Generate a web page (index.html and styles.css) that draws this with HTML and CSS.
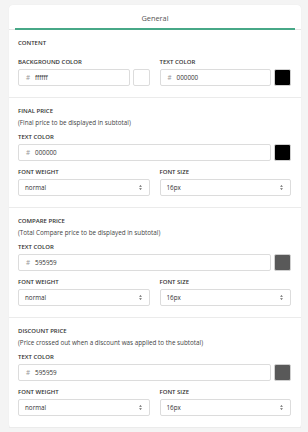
FILE: index.html
```html
<!DOCTYPE html>
<html lang="en">
<head>
    <meta charset="UTF-8">
    <meta name="viewport" content="width=device-width, initial-scale=1.0">
    <title>Subtotal Settings</title>
    <link rel="stylesheet" href="styles.css">
</head>
<body>
    <div class="card">
        <div class="tabs">
            <div class="tab active">General</div>
        </div>

        <!-- Content -->
        <div class="section">
            <div class="section-title">CONTENT</div>
            <div class="row first">
                <div class="field">
                    <label>BACKGROUND COLOR</label>
                    <div class="color-input">
                        <div class="input"><span class="hash">#</span>ffffff</div>
                        <div class="swatch" style="background: #ffffff;"></div>
                    </div>
                </div>
                <div class="field">
                    <label>TEXT COLOR</label>
                    <div class="color-input">
                        <div class="input"><span class="hash">#</span>000000</div>
                        <div class="swatch dark" style="background: #000000;"></div>
                    </div>
                </div>
            </div>
        </div>

        <!-- Final price -->
        <div class="section">
            <div class="section-title">FINAL PRICE</div>
            <div class="section-note">(Final price to be displayed in subtotal)</div>
            <div class="row">
                <div class="field wide">
                    <label>TEXT COLOR</label>
                    <div class="color-input">
                        <div class="input"><span class="hash">#</span>000000</div>
                        <div class="swatch dark" style="background: #000000;"></div>
                    </div>
                </div>
            </div>
            <div class="row">
                <div class="field">
                    <label>FONT WEIGHT</label>
                    <div class="select">normal <svg class="arrows" viewBox="0 0 4 7"><path d="M2 0 L4 2.5 H0 Z M2 7 L4 4.5 H0 Z"/></svg></div>
                </div>
                <div class="field">
                    <label>FONT SIZE</label>
                    <div class="select">16px <svg class="arrows" viewBox="0 0 4 7"><path d="M2 0 L4 2.5 H0 Z M2 7 L4 4.5 H0 Z"/></svg></div>
                </div>
            </div>
        </div>

        <!-- Compare price -->
        <div class="section">
            <div class="section-title">COMPARE PRICE</div>
            <div class="section-note">(Total Compare price to be displayed in subtotal)</div>
            <div class="row">
                <div class="field wide">
                    <label>TEXT COLOR</label>
                    <div class="color-input">
                        <div class="input"><span class="hash">#</span>595959</div>
                        <div class="swatch dark" style="background: #595959;"></div>
                    </div>
                </div>
            </div>
            <div class="row">
                <div class="field">
                    <label>FONT WEIGHT</label>
                    <div class="select">normal <svg class="arrows" viewBox="0 0 4 7"><path d="M2 0 L4 2.5 H0 Z M2 7 L4 4.5 H0 Z"/></svg></div>
                </div>
                <div class="field">
                    <label>FONT SIZE</label>
                    <div class="select">16px <svg class="arrows" viewBox="0 0 4 7"><path d="M2 0 L4 2.5 H0 Z M2 7 L4 4.5 H0 Z"/></svg></div>
                </div>
            </div>
        </div>

        <!-- Discount price -->
        <div class="section">
            <div class="section-title">DISCOUNT PRICE</div>
            <div class="section-note">(Price crossed out when a discount was applied to the subtotal)</div>
            <div class="row">
                <div class="field wide">
                    <label>TEXT COLOR</label>
                    <div class="color-input">
                        <div class="input"><span class="hash">#</span>595959</div>
                        <div class="swatch dark" style="background: #595959;"></div>
                    </div>
                </div>
            </div>
            <div class="row">
                <div class="field">
                    <label>FONT WEIGHT</label>
                    <div class="select">normal <svg class="arrows" viewBox="0 0 4 7"><path d="M2 0 L4 2.5 H0 Z M2 7 L4 4.5 H0 Z"/></svg></div>
                </div>
                <div class="field">
                    <label>FONT SIZE</label>
                    <div class="select">16px <svg class="arrows" viewBox="0 0 4 7"><path d="M2 0 L4 2.5 H0 Z M2 7 L4 4.5 H0 Z"/></svg></div>
                </div>
            </div>
        </div>
    </div>
</body>
</html>
```

FILE: styles.css
```css
/* General Styles */
body {
    margin: 0;
    padding: 5px 0 0 9px;
    background: #f4f4f4;
    font-family: 'Open Sans', sans-serif;
    color: #333;
}

/* Card */
.card {
    width: 292px;
    background: #fff;
    border-radius: 4px;
    box-shadow: 0 0 1px rgba(0, 0, 0, 0.08);
}

/* Tabs */
.tabs {
    display: flex;
    padding: 0 6px;
    border-bottom: 1px solid #e6e6e6;
}

.tab {
    flex: 1;
    height: 23px;
    line-height: 26px;
    text-align: center;
    font-size: 7.4px;
    color: #555;
}

.tab.active {
    border-bottom: 2px solid #47a887;
    margin-bottom: -1px;
}

/* Sections */
.section {
    padding: 7px 10px 11px 9px;
    border-bottom: 1px solid #ebebeb;
}

.section:first-of-type {
    padding-top: 6px;
    padding-bottom: 12px;
}

.section-title {
    font-size: 6px;
    font-weight: 600;
    line-height: 12px;
    color: #333;
}

.section-note {
    font-size: 6.3px;
    line-height: 12px;
    color: #444;
}

/* Rows and fields */
.row {
    display: flex;
    gap: 10px;
    margin-top: 6px;
}

.section-note + .row {
    margin-top: 3px;
}

.row.first {
    margin-top: 8px;
}

.field {
    flex: 1;
    min-width: 0;
}

.field label {
    display: block;
    font-size: 6px;
    font-weight: 600;
    line-height: 10px;
    margin-bottom: 2px;
    color: #333;
}

.color-input {
    display: flex;
    gap: 3px;
}

.input {
    flex: 1;
    height: 17px;
    box-sizing: border-box;
    border: 1px solid #dcdcdc;
    border-radius: 2px;
    padding-left: 7px;
    font-size: 6.3px;
    line-height: 15px;
    color: #333;
}

.hash {
    color: #999;
    margin-right: 5px;
}

.swatch {
    width: 17px;
    height: 17px;
    box-sizing: border-box;
    border: 1px solid #dcdcdc;
    border-radius: 2px;
}

.swatch.dark {
    border-color: #d0d0d0;
}

/* Select boxes */
.select {
    display: flex;
    justify-content: space-between;
    align-items: center;
    height: 17px;
    box-sizing: border-box;
    border: 1px solid #dcdcdc;
    border-radius: 2px;
    padding: 0 7px 0 6px;
    font-size: 6.3px;
    color: #333;
}

.arrows {
    width: 3px;
    height: 5px;
    fill: #666;
}
```
